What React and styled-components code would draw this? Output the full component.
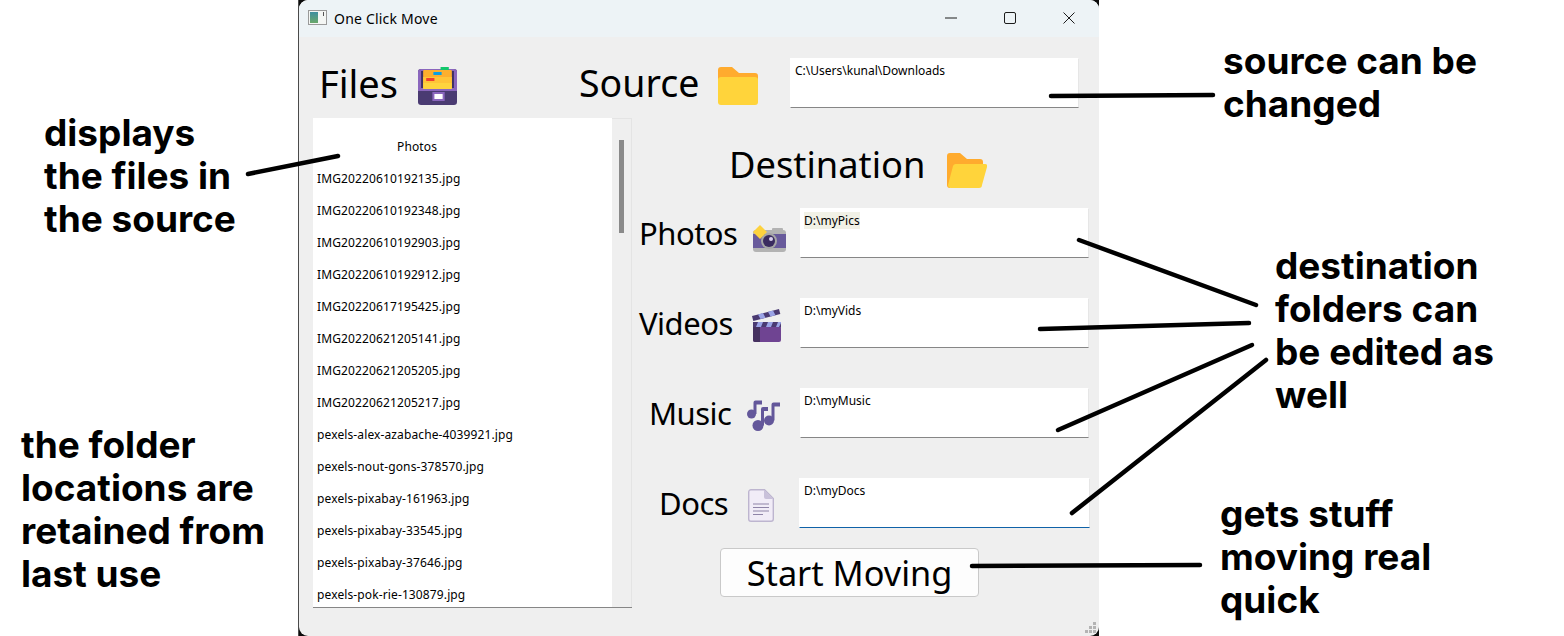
import React from 'react';
import styled, { createGlobalStyle } from 'styled-components';

const GlobalStyle = createGlobalStyle`
  html, body {
    margin: 0;
    padding: 0;
    background: #fff;
  }
`

const Page = styled.div`
  position: relative;
  display: grid;
  grid-template-columns: 298px 801px 1fr;
  width: 1564px;
  height: 636px;
  overflow: hidden;
  background: #fff;
`

const NoteColumn = styled.div`
  display: flex;
  flex-direction: column;
  padding-top: ${p => p.$top}px;
`

const Note = styled.div`
  margin-top: ${p => p.$gap || 0}px;
  margin-left: ${p => p.$left}px;
  font-family: Inter, "Liberation Sans", sans-serif;
  font-weight: 700;
  font-size: 37px;
  line-height: 43px;
  color: #000;
  white-space: nowrap;
`

const Strokes = styled.svg`
  position: absolute;
  left: 0;
  top: 0;
  pointer-events: none;
`

const WindowFrame = styled.div`
  background: #0c0c0c;
  border-left: 1px solid #4a4a4a;
  height: 636px;
`

const Window = styled.div`
  position: relative;
  display: flex;
  flex-direction: column;
  height: 636px;
  border-radius: 9px;
  overflow: hidden;
  background: #efefef;
  font-family: Tahoma, "Noto Sans", sans-serif;
  color: #000;
`

const TitleBar = styled.div`
  display: flex;
  align-items: flex-start;
  height: 37px;
  flex: none;
  padding: 0 1px 0 9px;
  background: #edf3f6;
`

const AppIcon = styled.svg`
  width: 19px;
  height: 15px;
  margin: 10px 7px 0 0;
`

const TitleText = styled.span`
  flex: 1;
  font-size: 14px;
  line-height: 37px;
  letter-spacing: 0.2px;
`

const WinButton = styled.div`
  display: flex;
  align-items: center;
  justify-content: center;
  width: 59px;
  height: 36px;
  color: #1c1c1c;
`

const Body = styled.div`
  display: flex;
  flex-direction: column;
  gap: 10px;
  padding: 21px 0 0 14px;
`

const TopRow = styled.div`
  display: grid;
  grid-template-columns: 266px 211px 289px;
  height: 50px;
`

const HeadGroup = styled.div`
  display: flex;
  align-items: center;
  padding-left: ${p => p.$inset || 0}px;
  gap: ${p => p.$gap}px;

  svg {
    margin-top: ${p => p.$drop || 0}px;
  }
`

const BigLabel = styled.span`
  font-size: ${p => p.$size || 38}px;
  line-height: 50px;
  white-space: nowrap;
`

const RowLabel = styled.span`
  margin-bottom: 2px;
  font-size: 31px;
  letter-spacing: -0.5px;
  line-height: 50px;
  white-space: nowrap;
`

const TextBox = styled.div`
  box-sizing: border-box;
  width: ${p => p.$focused ? 291 : 289}px;
  height: 50px;
  margin-left: ${p => p.$focused ? -1 : 0}px;
  padding: 4px 4px 0 ${p => p.$pad || 4}px;
  background: #fff;
  border: 1px solid #fff;
  border-right-color: #e6e6e6;
  border-bottom: 1px solid ${p => p.$focused ? '#0f62a8' : '#868686'};
  font-size: 12px;
  line-height: 16px;
`

const Marked = styled.span`
  background: #f1f1e6;
`

const Columns = styled.div`
  display: flex;
  height: 490px;
`

const ListPanel = styled.div`
  display: flex;
  width: 319px;
  height: 490px;
  box-sizing: border-box;
  border-bottom: 1px solid #868686;
`

const FileList = styled.div`
  width: 299px;
  padding-top: 13px;
  background: #fff;
  overflow: hidden;
`

const FileRow = styled.div`
  height: 32px;
  padding-left: ${p => p.$head ? 84 : 4}px;
  font-size: 12px;
  line-height: 32px;
  letter-spacing: 0.12px;
  white-space: nowrap;
`

const ScrollTrack = styled.div`
  box-sizing: border-box;
  width: 20px;
  padding: 21px 0 0 7px;
  border-right: 1px solid #e4e4e4;
  border-top: 1px solid #e4e4e4;
`

const ScrollThumb = styled.div`
  width: 5px;
  height: 93px;
  background: #8a8a8a;
`

const DestPanel = styled.div`
  display: flex;
  flex-direction: column;
  padding: 27px 0 0 7px;
`

const DestHead = styled.div`
  display: flex;
  align-items: center;
  height: 38px;
  margin-bottom: 25px;
  padding-left: 90px;
  gap: 22px;

  svg {
    margin-top: 12px;
  }
`

const DestRows = styled.div`
  display: flex;
  flex-direction: column;
  gap: 40px;
`

const DestRow = styled.div`
  display: grid;
  grid-template-columns: 161px 289px;
  height: 50px;
`

const MoveButton = styled.button`
  box-sizing: border-box;
  width: 259px;
  height: 49px;
  margin: 20px 0 0 81px;
  padding: 0 0 4px;
  background: #fdfdfd;
  border: 1px solid #c9c9c9;
  border-radius: 4px;
  font-family: inherit;
  font-size: 34.300px;
  color: #000;
`

const ResizeGrip = styled.svg`
  position: absolute;
  right: 2px;
  bottom: 2px;
`

const CabinetIcon = () => (
  <svg width="39" height="38" viewBox="0 0 38 38" preserveAspectRatio="none">
    <rect y="2" width="38" height="36" rx="3" fill="#4a3b72" />
    <path d="M3 2h32a3 3 0 0 1 3 3v19H0V5a3 3 0 0 1 3-3z" fill="#8a66bd" />
    <rect x="3" y="4" width="32" height="17" fill="#3f3163" />
    <rect x="5" y="3" width="28" height="19" rx="1" fill="#fdaf2e" />
    <rect x="5" y="10" width="28" height="6" fill="#ffc438" />
    <rect x="5" y="16" width="28" height="6" fill="#ffd43e" />
    <rect x="22" y="0" width="8" height="3" fill="#12c76b" />
    <rect x="15" y="5" width="8" height="3" fill="#0a9fe0" />
    <rect x="8" y="11" width="8" height="3" fill="#f0402f" />
    <rect x="14" y="25" width="12" height="9" fill="#8a66bd" />
    <rect x="16" y="27" width="8" height="5" fill="#fff" />
  </svg>
);

const FolderIcon = () => (
  <svg width="40" height="38" viewBox="0 0 40 38">
    <path d="M3 0h11l7 6h16a3 3 0 0 1 3 3v6H0V3a3 3 0 0 1 3-3z" fill="#ffab2e" />
    <rect y="10" width="40" height="28" rx="3" fill="#ffd43b" />
  </svg>
);

const OpenFolderIcon = () => (
  <svg width="40" height="35" viewBox="0 0 40 35">
    <path d="M3 0h10l7 6h13a3 3 0 0 1 3 3v6H8L3 35a3 3 0 0 1-3-3V3a3 3 0 0 1 3-3z" fill="#ffab2e" />
    <path d="M9 11h29a2 2 0 0 1 2 3l-5 18a3 3 0 0 1-3 3H4a3 3 0 0 1-3-3l5-19a3 3 0 0 1 3-2z" fill="#ffd43b" />
  </svg>
);

const CameraIcon = () => (
  <svg width="33" height="27" viewBox="0 0 33 27">
    <rect x="19" y="3" width="11" height="4" rx="1" fill="#b3b3b3" />
    <rect y="5" width="33" height="22" rx="3" fill="#b3b3b3" />
    <rect y="9" width="33" height="14" fill="#685a9b" />
    <circle cx="16" cy="16" r="8" fill="#a6a6a6" />
    <circle cx="16" cy="16" r="6" fill="#3a2b5f" />
    <circle cx="18" cy="14" r="2" fill="#d9d0ee" />
    <path d="M7 0l7 7-7 7-7-7z" fill="#fdd23e" />
  </svg>
);

const ClapperIcon = () => (
  <svg width="29" height="33" viewBox="0 0 29 33">
    <path d="M1 18h28v13a2 2 0 0 1-2 2H3a2 2 0 0 1-2-2z" fill="#6f4492" />
    <path d="M1 18h7v15H3a2 2 0 0 1-2-2z" fill="#45315f" />
    <rect x="1" y="13" width="28" height="5" fill="#4a3a72" />
    <path d="M6 13h5l-2 5H4zM16 13h5l-2 5h-5zM26 13h3v1l-2 4h-3z" fill="#9aa3e6" />
    <path d="M0 7L27 0l1.300 5L1.300 12z" fill="#4a3a72" />
    <path d="M6 5.400l5-1.300 2.500 4.700-5 1.300zM16 2.800l5-1.300 2.500 4.700-5 1.300z" fill="#9aa3e6" />
  </svg>
);

const MusicIcon = () => (
  <svg width="33" height="31" viewBox="0 0 33 31" fill="#63579a">
    <circle cx="4.500" cy="14" r="4.500" />
    <path d="M6.500 14V2.500a2 2 0 0 1 2-2H15v4H9.500V14z" />
    <circle cx="11" cy="25.500" r="5.500" />
    <path d="M14 25.500V9a2 2 0 0 1 2-2h5v4h-4v14.500z" />
    <circle cx="22" cy="20.500" r="5" />
    <path d="M24.500 20.500V4.500a2 2 0 0 1 2-2H33v4h-5.500v14z" />
  </svg>
);

const DocIcon = () => (
  <svg width="26" height="33" viewBox="0 0 26 33">
    <path d="M3 .7h13.500L25.300 9.500V30a2.300 2.300 0 0 1-2.300 2.300H3A2.300 2.300 0 0 1 .7 30V3A2.300 2.300 0 0 1 3 .7z" fill="#f1ecf7" stroke="#bdb5cf" strokeWidth="1.400" />
    <path d="M16 1l9 9h-7a2 2 0 0 1-2-2z" fill="#c9c1da" />
    <path d="M5 15h16M5 18.500h16M5 22h16M5 25.500h10" stroke="#8f84a8" strokeWidth="1" />
  </svg>
);

const files = [
  'IMG20220610192135.jpg',
  'IMG20220610192348.jpg',
  'IMG20220610192903.jpg',
  'IMG20220610192912.jpg',
  'IMG20220617195425.jpg',
  'IMG20220621205141.jpg',
  'IMG20220621205205.jpg',
  'IMG20220621205217.jpg',
  'pexels-alex-azabache-4039921.jpg',
  'pexels-nout-gons-378570.jpg',
  'pexels-pixabay-161963.jpg',
  'pexels-pixabay-33545.jpg',
  'pexels-pixabay-37646.jpg',
  'pexels-pok-rie-130879.jpg',
];

const destinations = [
  { label: 'Photos', path: 'D:\\myPics', inset: 0, gap: 16, drop: 9, Icon: CameraIcon, marked: true },
  { label: 'Videos', path: 'D:\\myVids', inset: 0, gap: 19, drop: 3, Icon: ClapperIcon },
  { label: 'Music', path: 'D:\\myMusic', inset: 10, gap: 15, drop: 3, Icon: MusicIcon },
  { label: 'Docs', path: 'D:\\myDocs', inset: 20, gap: 20, drop: 3, Icon: DocIcon, focused: true },
];

const arrows = [
  [248, 174, 338, 156],
  [1051, 96, 1213, 95],
  [1079, 240, 1256, 305],
  [1040, 329, 1249, 323],
  [1058, 430, 1252, 345],
  [1072, 513, 1266, 360],
  [972, 566, 1200, 565],
];

const App = () => (
  <Page>
    <GlobalStyle />
    <NoteColumn $top={111}>
      <Note $left={44}>displays<br />the files in<br />the source</Note>
      <Note $left={21} $gap={183}>the folder<br />locations are<br />retained from<br />last use</Note>
    </NoteColumn>

    <WindowFrame>
      <Window>
        <TitleBar>
          <AppIcon viewBox="0 0 19 15">
            <defs>
              <linearGradient id="appGrad" x1="0" y1="0" x2="0" y2="1">
                <stop offset="0" stopColor="#3f8fa0" />
                <stop offset="1" stopColor="#6aa86a" />
              </linearGradient>
            </defs>
            <rect x=".5" y=".5" width="18" height="14" fill="#f4f6f4" stroke="#9a9a9a" />
            <rect x="2" y="2" width="8" height="11" fill="url(#appGrad)" />
            <rect x="15" y="2" width="1" height="4" fill="#555" />
          </AppIcon>
          <TitleText>One Click Move</TitleText>
          <WinButton>
            <svg width="12" height="12" viewBox="0 0 12 12"><path d="M0 6h12" stroke="currentColor" /></svg>
          </WinButton>
          <WinButton>
            <svg width="12" height="12" viewBox="0 0 12 12"><rect x=".5" y=".5" width="11" height="11" rx="1.500" fill="none" stroke="currentColor" /></svg>
          </WinButton>
          <WinButton>
            <svg width="12" height="12" viewBox="0 0 12 12"><path d="M.5.500l11 11M11.500.500l-11 11" stroke="currentColor" /></svg>
          </WinButton>
        </TitleBar>

        <Body>
          <TopRow>
            <HeadGroup $inset={6} $gap={20} $drop={6}>
              <BigLabel>Files</BigLabel>
              <CabinetIcon />
            </HeadGroup>
            <HeadGroup $gap={19} $drop={6}>
              <BigLabel $size={37.500}>Source</BigLabel>
              <FolderIcon />
            </HeadGroup>
            <TextBox>C:\Users\kunal\Downloads</TextBox>
          </TopRow>

          <Columns>
            <ListPanel>
              <FileList>
                <FileRow $head>Photos</FileRow>
                {files.map(name => <FileRow key={name}>{name}</FileRow>)}
              </FileList>
              <ScrollTrack><ScrollThumb /></ScrollTrack>
            </ListPanel>

            <DestPanel>
              <DestHead>
                <BigLabel $size={36.300}>Destination</BigLabel>
                <OpenFolderIcon />
              </DestHead>
              <DestRows>
                {destinations.map(({ label, path, inset, gap, drop, Icon, marked, focused }) => (
                  <DestRow key={label}>
                    <HeadGroup $inset={inset} $gap={gap} $drop={drop}>
                      <RowLabel>{label}</RowLabel>
                      <Icon />
                    </HeadGroup>
                    <TextBox $focused={focused} $pad={focused ? 4 : 3}>{marked ? <Marked>{path}</Marked> : path}</TextBox>
                  </DestRow>
                ))}
              </DestRows>
              <MoveButton>Start Moving</MoveButton>
            </DestPanel>
          </Columns>
        </Body>

        <ResizeGrip width="12" height="12" viewBox="0 0 12 12" fill="#b4b4b4">
          <rect x="8" y="0" width="3" height="3" />
          <rect x="4" y="4" width="3" height="3" />
          <rect x="8" y="4" width="3" height="3" />
          <rect x="0" y="8" width="3" height="3" />
          <rect x="4" y="8" width="3" height="3" />
          <rect x="8" y="8" width="3" height="3" />
        </ResizeGrip>
      </Window>
    </WindowFrame>

    <NoteColumn $top={39}>
      <Note $left={124}>source can be<br />changed</Note>
      <Note $left={176} $gap={119}>destination<br />folders can<br />be edited as<br />well</Note>
      <Note $left={121} $gap={76}>gets stuff<br />moving real<br />quick</Note>
    </NoteColumn>

    <Strokes width="1564" height="636" viewBox="0 0 1564 636">
      {arrows.map(([x1, y1, x2, y2]) => (
        <line key={x1} x1={x1} y1={y1} x2={x2} y2={y2} stroke="#000" strokeWidth="4.500" strokeLinecap="round" />
      ))}
    </Strokes>
  </Page>
);

export default App;
